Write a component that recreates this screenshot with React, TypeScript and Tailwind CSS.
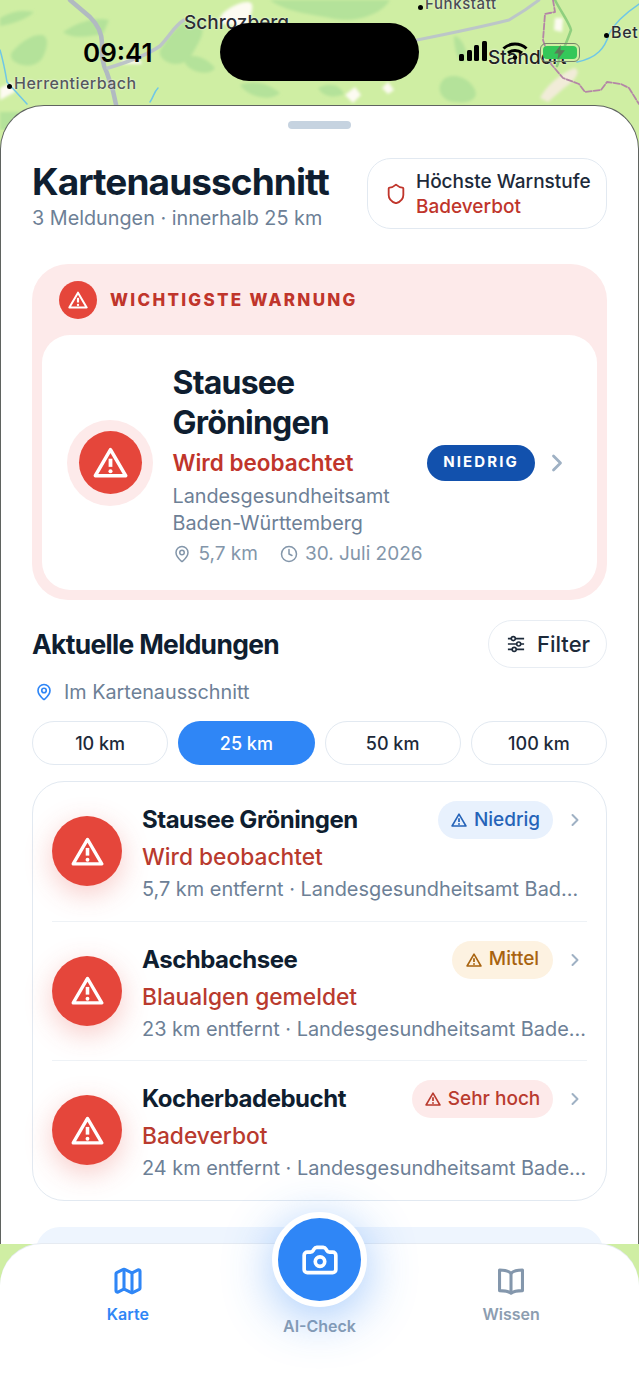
import { Camera, ChevronRight, Clock, Map as MapIcon, MapPin, Shield } from "lucide-react";

// Warning triangle with a sharp outline, used across all the badges
function WarnIcon({ className }: { className?: string }) {
  return (
    <svg viewBox="0 0 24 24" fill="none" stroke="currentColor" className={className}>
      <path d="M12 3.2 22.4 21H1.6Z" strokeWidth="2.4" strokeLinejoin="round" />
      <path d="M12 9.4v5.6" strokeWidth="2.6" />
      <circle cx="12" cy="18" r="1.4" fill="currentColor" stroke="none" />
    </svg>
  );
}

function FilterIcon() {
  return (
    <svg viewBox="0 0 20 20" fill="none" stroke="currentColor" strokeWidth="1.8" className="h-[18px] w-[18px]">
      <path d="M1 4h18M1 10h18M1 16h18" />
      <circle cx="7" cy="4" r="2.2" fill="#fff" />
      <circle cx="13" cy="10" r="2.2" fill="#fff" />
      <circle cx="8" cy="16" r="2.2" fill="#fff" />
    </svg>
  );
}

function BookIcon() {
  return (
    <svg viewBox="0 0 24 24" fill="none" stroke="currentColor" strokeWidth="2.3" strokeLinejoin="round" className="h-[32px] w-[32px]">
      <path d="M12 6.2C10 4.4 7 3.8 3.4 3.8v15.4c3.6 0 6.6.4 8.6 2 2-1.6 5-2 8.6-2V3.8C17 3.8 14 4.4 12 6.2Z" />
      <path d="M12 6.2v15" />
    </svg>
  );
}

function MapBackdrop() {
  return (
    <svg viewBox="0 0 639 130" className="absolute left-0 top-0 h-[130px] w-[639px]">
      <defs>
        <filter id="soft">
          <feGaussianBlur stdDeviation="1.6" />
        </filter>
      </defs>
      <rect width="639" height="130" fill="#cfeea3" />
      <g fill="#b4e29a" filter="url(#soft)">
        <path d="M12 52c10-12 22-18 30-17 8 2 5 14 1 22-5 9-16 10-24 7-6-2-10-7-7-12Z" />
        <path d="M0 18c14-8 24-8 34-6-6 6-20 12-34 14Z" />
        <path d="M63 32c12-8 30-16 46-12l-6 14c-12 2-30 6-40-2Z" />
        <path d="M160 50c8-12 16-26 30-30 12-2 16 8 10 20-6 10-10 24-24 24-8 0-18-6-16-14Z" />
        <path d="M185 58c10-6 24 2 30 10-4 6-14 6-22 2-6-3-10-8-8-12Z" />
        <path d="M240 85c16-6 30 0 40 8-8 8-30 6-40-8Z" />
        <path d="M270 0h120c-8 14-34 24-60 18-20-4-44-6-60-18Z" />
        <path d="M318 88c10-6 22-4 26 6-8 4-20 4-26-6Z" />
        <path d="M445 78c12-6 26 2 30 12 4 10-8 14-20 12-12 0-22-14-10-24Z" />
        <path d="M454 36c6 0 14 12 12 24-6 6-12-8-12-24Z" />
        <path d="M0 112h20l-8 18H0Z" />
      </g>
      <g fill="#fdfbf2" filter="url(#soft)">
        <path d="M222 14c8-8 26-16 30-10 2 8-4 14-4 22-10 0-18 0-30-4Z" />
        <path d="M122 60h18l2 4h-20Z" />
        <path d="M0 88l12-6 3 10-15 8Z" />
        <path d="M345 95l10-8 6 8-8 8Z" />
        <path d="M388 82l6 8-6 4-6-6Z" />
        <path d="M555 18h8l-1 14-8-2Z" />
        <path d="M540 98c6-12 20-24 34-30 8 2 2 12-10 20l-16 14Z" fill="#f1ecd8" />
      </g>
      <g fill="none" strokeLinecap="round" strokeLinejoin="round">
        <path d="M70 0 90 17c8 8 12 16 12 26 0 14 0 20 5 30l6 18 4 18" stroke="#b1bac1" strokeWidth="4.5" />
        <path d="M108 68c20-6 38-12 52-22 10-10 14-20 24-26" stroke="#bcc4c8" strokeWidth="3.5" />
        <path d="M417 40c30-6 60-12 92-20l16-10 14-10" stroke="#bcc6c8" strokeWidth="3" />
        <path d="M0 50c3 10 5 20 7 32l20 22" stroke="#6fc7e6" strokeWidth="1.5" />
        <path d="M158 88c-4 4-4 8-8 14" stroke="#6fc7e6" strokeWidth="1.5" />
        <path d="M639 4c-12 8-24 18-30 30-4 14-12 24-32 28" stroke="#6fc7e6" strokeWidth="1.5" />
        <path d="M555 0c6 12 14 22 16 30-4 12-10 24-14 36" stroke="#8fcf7f" strokeWidth="2.5" />
        <path d="M553 0l2 12-10 2-2 26 8 24 12 14 16 6 6 8 16-2 6-8 14 2 8 4 10 16" stroke="#b486a6" strokeWidth="1.8" strokeDasharray="6 2" />
      </g>
    </svg>
  );
}

function MapLabel({ x, y, dot, className, children }: { x: number; y: number; dot?: boolean; className: string; children: string }) {
  return (
    <div className={`absolute flex items-end whitespace-nowrap [text-shadow:0_0_2px_#ffffff] ${className}`} style={{ left: x, top: y }}>
      {dot && <span className="mb-[4px] mr-[2px] h-[5px] w-[5px] rounded-full bg-black" />}
      {children}
    </div>
  );
}

function StatusIcons() {
  return (
    <div className="absolute left-[459px] top-[40px] flex items-center gap-[15px]">
      <div className="flex items-end gap-[2.5px]">
        <span className="h-[7px] w-[5px] rounded-[1.5px] bg-black" />
        <span className="h-[11px] w-[5px] rounded-[1.5px] bg-black" />
        <span className="h-[16px] w-[5px] rounded-[1.5px] bg-black" />
        <span className="h-[20px] w-[5px] rounded-[1.5px] bg-black" />
      </div>
      <svg viewBox="0 0 26 20" fill="none" stroke="#000" strokeWidth="3" className="h-[20px] w-[26px]">
        <path d="M1.5 7.5c6.5-6 16.5-6 23 0" />
        <path d="M6 12c4-3.5 10-3.5 14 0" />
        <circle cx="13" cy="16.5" r="2.2" fill="#000" stroke="none" />
      </svg>
      <div className="-ml-[3px] mt-[3px] flex h-[19px] w-[40px] items-center justify-center rounded-[6px] border border-[#77836a] p-[2px]">
        <div className="flex h-full w-full items-center justify-center rounded-[4px] bg-[#34c759]">
          <svg viewBox="0 0 10 14" className="h-[15px] w-[11px]" fill="#5b7a58">
            <path d="M6 0 0 8h4l-1 6 7-9H6Z" />
          </svg>
        </div>
      </div>
    </div>
  );
}

const rows = [
  {
    name: "Stausee Gröningen",
    status: "Wird beobachtet",
    meta: "5,7 km entfernt · Landesgesundheitsamt Baden-Württemberg",
    level: "Niedrig",
    pill: "bg-[#e8f1fd] text-[#2563b8] w-[115px]",
  },
  {
    name: "Aschbachsee",
    status: "Blaualgen gemeldet",
    meta: "23 km entfernt · Landesgesundheitsamt Baden-Württemberg",
    level: "Mittel",
    pill: "bg-[#fdf2e1] text-[#a8630f] w-[101px]",
  },
  {
    name: "Kocherbadebucht",
    status: "Badeverbot",
    meta: "24 km entfernt · Landesgesundheitsamt Baden-Württemberg",
    level: "Sehr hoch",
    pill: "bg-[#fdeaea] text-[#b93a2e] w-[141px]",
  },
];

const distances = ["10 km", "25 km", "50 km", "100 km"];

export default function App() {
  return (
    <div className="relative h-[1391px] w-[639px] overflow-hidden bg-[#cfeea3] font-[family-name:Inter,sans-serif] text-[#0f1e30]">
      <MapBackdrop />
      <MapLabel x={184} y={11} className="text-[19px] font-medium leading-[23px] text-[#2b2d33]">Schrozberg</MapLabel>
      <MapLabel x={418} y={-6} dot className="text-[15px] font-medium leading-[20px] tracking-[0.04em] text-[#4a4d52]">Funkstatt</MapLabel>
      <MapLabel x={604} y={22} dot className="text-[16px] font-medium leading-[20px] tracking-[0.04em] text-[#2b2d33]">Bet</MapLabel>
      <MapLabel x={7} y={73} dot className="text-[16px] font-medium leading-[20px] tracking-[0.03em] text-[#55585c]">Herrentierbach</MapLabel>
      <MapLabel x={488} y={46} className="text-[19px] font-medium leading-[23px] text-[#222]">Standort</MapLabel>

      {/* status bar */}
      <div className="absolute left-[83px] top-[37px] text-[26px] font-semibold leading-[32px] text-black">09:41</div>
      <div className="absolute left-[220px] top-[23px] h-[58px] w-[199px] rounded-[29px] bg-black" />
      <StatusIcons />

      <div className="relative mt-[105px] h-[1139px] overflow-hidden rounded-t-[44px] border border-b-0 border-[#5f6360] bg-white px-[31px]">
        <div className="mx-auto mt-[15px] h-[8px] w-[63px] rounded-full bg-[#c6d3e0]" />

        {/* header */}
        <div className="mt-[29px] flex items-start justify-between">
          <div className="pt-[2px]">
            <h1 className="text-[37px] font-bold leading-[44px] tracking-[-0.025em]">Kartenausschnitt</h1>
            <p className="mt-[2px] text-[19.8px] leading-[24px] text-[#6d8096]">3 Meldungen · innerhalb 25 km</p>
          </div>
          <div className="flex h-[71px] w-[240px] items-center gap-[9px] rounded-[24px] border border-[#e2e9f1] pl-[17px]">
            <Shield className="h-[22px] w-[22px] text-[#c0352b]" strokeWidth={2} />
            <div className="text-[19px] font-medium leading-[25px]">
              <div className="text-[#1d2a3a]">Höchste Warnstufe</div>
              <div className="text-[#c0352b]">Badeverbot</div>
            </div>
          </div>
        </div>

        {/* top warning */}
        <section className="mt-[34px] h-[336px] rounded-[36px] bg-[#fdeaea] px-[10px] pt-[17px]">
          <div className="flex items-center gap-[13px] pl-[17px]">
            <div className="flex h-[38px] w-[38px] items-center justify-center rounded-full bg-[#e5463b] text-white">
              <WarnIcon className="h-[20px] w-[20px]" />
            </div>
            <span className="pt-[2px] text-[17px] font-extrabold tracking-[0.135em] text-[#c0352b]">WICHTIGSTE WARNUNG</span>
          </div>
          <div className="mt-[16px] flex h-[255px] items-center rounded-[28px] bg-white pl-[25px]">
            <div className="flex h-[86px] w-[86px] shrink-0 items-center justify-center rounded-full bg-[#fdeaea]">
              <div className="flex h-[63px] w-[63px] items-center justify-center rounded-full bg-[#e5463b] text-white">
                <WarnIcon className="h-[35px] w-[35px]" />
              </div>
            </div>
            <div className="ml-[19.5px] w-[254.5px] pt-[5px]">
              <div className="text-[32px] font-bold leading-[40px] tracking-[-0.025em]">
                Stausee
                <br />
                Gröningen
              </div>
              <div className="mt-[5px] text-[22.5px] font-semibold leading-[30px] text-[#c0352b]">Wird beobachtet</div>
              <div className="mt-[5px] text-[19.8px] leading-[27px] text-[#6d8096]">
                Landesgesundheitsamt
                <br />
                Baden-Württemberg
              </div>
              <div className="mt-[4px] flex items-center whitespace-nowrap text-[19px] leading-[26px] text-[#8396aa]">
                <MapPin className="mr-[8px] h-[18px] w-[18px]" strokeWidth={2} />
                <span>5,7 km</span>
                <Clock className="ml-[22px] mr-[7px] h-[18px] w-[18px]" strokeWidth={2} />
                <span>30. Juli 2026</span>
              </div>
            </div>
            <div className="flex h-[36px] w-[108px] shrink-0 items-center justify-center rounded-full bg-[#1251ad] text-[15px] font-bold tracking-[0.14em] text-white">
              NIEDRIG
            </div>
            <ChevronRight className="ml-[8px] h-[28px] w-[28px] text-[#9fb1c4]" strokeWidth={2.4} />
          </div>
        </section>

        {/* list head */}
        <div className="mt-[20px] flex items-center justify-between">
          <h2 className="text-[26.4px] font-bold leading-[32px] tracking-[-0.025em]">Aktuelle Meldungen</h2>
          <div className="flex h-[48px] w-[119px] items-center gap-[12px] rounded-full border border-[#e8edf3] pl-[18px] text-[#1d2a3a]">
            <FilterIcon />
            <span className="text-[22px] font-medium">Filter</span>
          </div>
        </div>
        <div className="mt-[12px] flex items-center text-[19.8px] leading-[24px] text-[#6d8096]">
          <MapPin className="ml-[3px] mr-[11px] h-[18px] w-[18px] text-[#2f86f6]" strokeWidth={2.2} />
          Im Kartenausschnitt
        </div>

        <div className="mt-[17px] grid grid-cols-4 gap-[10px]">
          {distances.map((d) => (
            <div
              key={d}
              className={
                d === "25 km"
                  ? "flex h-[44px] items-center justify-center rounded-full bg-[#2f86f6] text-[18px] font-medium text-white"
                  : "flex h-[44px] items-center justify-center rounded-full border border-[#e2e9f1] text-[18px] font-medium text-[#1d2a3a]"
              }
            >
              {d}
            </div>
          ))}
        </div>

        {/* list */}
        <div className="mt-[16px] h-[420px] rounded-[32px] border border-[#e2e9f1] px-[19px]">
          {rows.map((r, i) => (
            <div key={r.name} className={i < 2 ? "flex h-[139.5px] border-b border-[#eef2f6] pt-[19px]" : "flex h-[139px] pt-[19px]"}>
              <div className="mt-[15px] flex h-[70px] w-[70px] shrink-0 items-center justify-center rounded-full bg-[#e5463b] text-white shadow-[0_8px_28px_rgba(229,70,59,0.28)]">
                <WarnIcon className="h-[33px] w-[33px]" />
              </div>
              <div className="ml-[20px] min-w-0 flex-1">
                <div className="flex h-[38px] items-center">
                  <span className="flex-1 text-[24px] font-bold tracking-[-0.02em]">{r.name}</span>
                  <span className={`flex h-[38px] items-center justify-center gap-[7px] rounded-full text-[19px] font-medium ${r.pill}`}>
                    <WarnIcon className="h-[16px] w-[16px]" />
                    {r.level}
                  </span>
                  <ChevronRight className="ml-[12px] mr-[2px] h-[20px] w-[20px] text-[#9fb1c4]" strokeWidth={2.4} />
                </div>
                <div className="mt-[3px] text-[22.75px] font-medium leading-[30px] text-[#b93a2e]">{r.status}</div>
                <div className="mt-[5px] w-[445px] truncate text-[19.9px] leading-[24px] text-[#6d8096]">{r.meta}</div>
              </div>
            </div>
          ))}
        </div>

        <div className="mx-[4px] mt-[26px] h-[60px] rounded-[24px] bg-[#eef5fe]" />
      </div>

      {/* tab bar */}
      <nav className="relative grid h-[147px] grid-cols-3 rounded-t-[42px] bg-white px-[32px] shadow-[0_-1px_0_#e6ebf2]">
        <div className="flex flex-col items-center pt-[21px] text-[#2f86f6]">
          <MapIcon className="h-[32px] w-[32px]" strokeWidth={2.3} />
          <span className="mt-[8px] text-[16px] font-semibold leading-[18px]">Karte</span>
        </div>
        <div className="flex flex-col items-center pt-[73px] text-[#8c9db0]">
          <span className="text-[16px] font-semibold leading-[18px]">AI-Check</span>
        </div>
        <div className="flex flex-col items-center pt-[21px] text-[#8497ac]">
          <BookIcon />
          <span className="mt-[8px] text-[16px] font-semibold leading-[18px] text-[#8c9db0]">Wissen</span>
        </div>
        <div className="absolute left-[272px] top-[-32px] flex h-[95px] w-[95px] items-center justify-center rounded-full border-[6px] border-white bg-[#2f86f6] text-white shadow-[0_10px_50px_rgba(47,134,246,0.45)]">
          <Camera className="h-[38px] w-[38px]" strokeWidth={2.3} />
        </div>
      </nav>
    </div>
  );
}
